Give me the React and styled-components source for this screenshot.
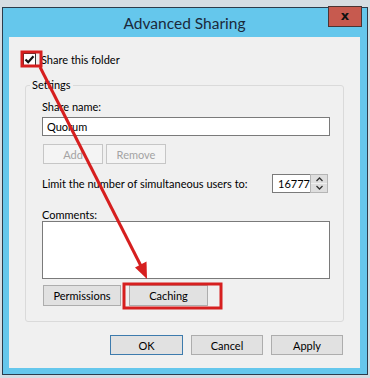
import React from "react";
import styled, { createGlobalStyle } from "styled-components";

const Global = createGlobalStyle`
  html, body { margin: 0; padding: 0; }
  body {
    background: #d6dde3;
    width: 370px;
    height: 378px;
    overflow: hidden;
    font-family: Lato, "Noto Sans", Arial, sans-serif;
    font-size: 11px;
    color: #000;
    position: relative;
    white-space: nowrap;
  }
`;

const Window = styled.div`
  position: relative;
  box-sizing: border-box;
  width: 366px;
  margin: 7px 0 0 2px;
  border: 1px solid #2c3c4c;
  background: #65c7ec;
  padding: 0 7px 6px 6px;
`;

const TitleBar = styled.div`
  height: 29px;
  display: flex;
  align-items: center;
  justify-content: center;
  font-size: 15.5px;
  color: #1b2a3b;
  padding-top: 1px;
  box-sizing: border-box;
`;

const CloseButton = styled.div`
  position: absolute;
  top: -2px;
  right: 5px;
  width: 34px;
  height: 21px;
  box-sizing: border-box;
  background: #c75a4f;
  border: 1px solid #4a3535;
  display: flex;
  align-items: center;
  justify-content: center;
  font-family: "DejaVu Sans", sans-serif;
  font-weight: bold;
  font-size: 13px;
  line-height: 1;
  color: #111;
  padding-bottom: 2px;
`;

const Content = styled.div`
  background: #f0f0f0;
  height: 331px;
  box-sizing: border-box;
  padding: 15px 17px 0 0;
  display: flex;
  flex-direction: column;
`;

const CheckRow = styled.div`
  display: flex;
  align-items: center;
  height: 15px;
  padding-left: 14px;
  gap: 5px;
  line-height: 15px;
`;

const CheckBox = styled.span`
  width: 13px;
  height: 13px;
  box-sizing: border-box;
  border: 1px solid #333;
  background: #fff;
  display: flex;
  align-items: center;
  justify-content: center;
`;

const Group = styled.fieldset`
  margin: 11px 0 0 16px;
  width: 319px;
  box-sizing: border-box;
  border: 1px solid #dadada;
  border-radius: 3px;
  padding: 8px 13px 15px 16px;
  min-width: 0;
`;

const Legend = styled.legend`
  padding: 0 2px;
  margin-left: -12px;
  line-height: 14px;
`;

const Label = styled.div`
  line-height: 13px;
  height: 13px;
  margin-top: ${(p) => p.$mt || 0}px;
`;

const TextBox = styled.div`
  box-sizing: border-box;
  height: ${(p) => p.$h}px;
  margin-top: ${(p) => p.$mt || 0}px;
  border: 1px solid #7a7a7a;
  background: #fff;
  padding: 0 4px;
  line-height: 17px;
`;

const Row = styled.div`
  display: flex;
  align-items: center;
  gap: ${(p) => p.$gap || 0}px;
  margin-top: ${(p) => p.$mt || 0}px;
  padding-left: 1px;
`;

const Button = styled.div`
  box-sizing: border-box;
  width: ${(p) => p.$w}px;
  height: ${(p) => p.$h || 20}px;
  display: flex;
  align-items: center;
  justify-content: center;
  background: ${(p) => (p.$disabled ? "#f4f4f4" : "#e1e1e1")};
  border: 1px solid
    ${(p) => (p.$default ? "#3d7bad" : p.$disabled ? "#c6c6c6" : "#adadad")};
  color: ${(p) => (p.$disabled ? "#a3a3a3" : "#000")};
`;

const LimitRow = styled.div`
  display: flex;
  align-items: center;
  justify-content: space-between;
  height: 19px;
  margin-top: 10px;
  padding-right: 2px;
`;

const Spinner = styled.div`
  display: flex;
  height: 19px;
`;

const SpinInput = styled.div`
  box-sizing: border-box;
  width: 38px;
  height: 19px;
  border: 1px solid #7a7a7a;
  border-right: none;
  background: #fff;
  padding-left: 5px;
  line-height: 17px;
  overflow: hidden;
`;

const SpinButtons = styled.div`
  width: 18px;
  display: flex;
  flex-direction: column;
  gap: 1px;
  box-sizing: border-box;
  border: 1px solid #b5b5b5;
  background: #f0f0f0;
`;

const SpinHalf = styled.div`
  flex: 1;
  background: #dedede;
  display: flex;
  align-items: center;
  justify-content: center;
`;

const BottomRow = styled.div`
  display: flex;
  justify-content: flex-end;
  gap: 8px;
  margin-top: 13px;
`;

const Overlay = styled.svg`
  position: absolute;
  left: 0;
  top: 0;
  pointer-events: none;
`;

const Chevron = ({ up }) => (
  <svg width="9" height="6" viewBox="0 0 9 6">
    <path
      d={up ? "M1.5 5 L4.5 2 L7.5 5" : "M1.5 1 L4.5 4 L7.5 1"}
      fill="none"
      stroke="#333"
      strokeWidth="1.3"
    />
  </svg>
);

export default function App() {
  return (
    <>
      <Global />
      <Window>
        <TitleBar>Advanced Sharing</TitleBar>
        <CloseButton>x</CloseButton>
        <Content>
          <CheckRow>
            <CheckBox>
              <svg width="11" height="11" viewBox="0 0 11 11">
                <path d="M1.5 5.5 L4.2 8.2 L9.5 2.2" fill="none" stroke="#111" strokeWidth="2.2" />
              </svg>
            </CheckBox>
            <span>Share this folder</span>
          </CheckRow>
          <Group>
            <Legend>Settings</Legend>
            <Label>Share name:</Label>
            <TextBox $h={19} $mt={4}>Quorum</TextBox>
            <Row $gap={3} $mt={8}>
              <Button $w={60} $disabled>Add</Button>
              <Button $w={60} $disabled>Remove</Button>
            </Row>
            <LimitRow>
              <span>Limit the number of simultaneous users to:</span>
              <Spinner>
                <SpinInput>16777</SpinInput>
                <SpinButtons>
                  <SpinHalf><Chevron up /></SpinHalf>
                  <SpinHalf><Chevron /></SpinHalf>
                </SpinButtons>
              </Spinner>
            </LimitRow>
            <Label $mt={15}>Comments:</Label>
            <TextBox $h={58} />
            <Row $gap={8} $mt={6}>
              <Button $w={78} $h={21}>Permissions</Button>
              <Button $w={79} $h={21}>Caching</Button>
            </Row>
          </Group>
          <BottomRow>
            <Button $w={73} $default>OK</Button>
            <Button $w={72}>Cancel</Button>
            <Button $w={72}>Apply</Button>
          </BottomRow>
        </Content>
      </Window>
      <Overlay width="370" height="378" viewBox="0 0 370 378">
        <rect x="22" y="52" width="19" height="14" fill="none" stroke="#d61f1f" strokeWidth="3" />
        <rect x="124" y="284" width="97" height="24" fill="none" stroke="#d61f1f" strokeWidth="3" />
        <line x1="40" y1="67" x2="141" y2="266" stroke="#d61f1f" strokeWidth="3" />
        <polygon points="147,279 135,267.5 146.5,261.5" fill="#d61f1f" />
      </Overlay>
    </>
  );
}
